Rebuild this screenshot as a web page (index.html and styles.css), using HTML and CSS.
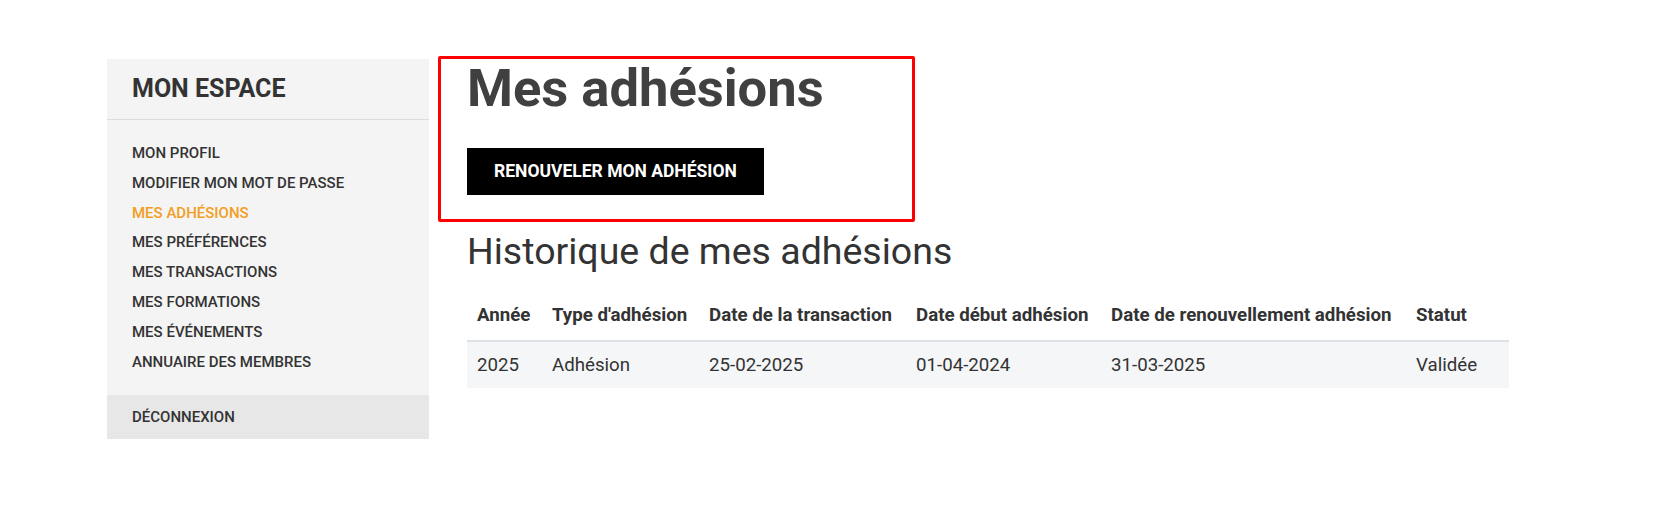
FILE: index.html
```html
<!DOCTYPE html>
<html lang="fr">
<head>
    <meta charset="UTF-8">
    <meta name="viewport" content="width=device-width, initial-scale=1.0">
    <title>Mes adhésions</title>
    <link rel="stylesheet" href="styles.css">
</head>
<body>
    <div class="page">
        <aside class="sidebar">
            <h3 class="sidebar-title">MON ESPACE</h3>
            <ul class="menu">
                <li><a href="#">MON PROFIL</a></li>
                <li><a href="#">MODIFIER MON MOT DE PASSE</a></li>
                <li><a href="#" class="active">MES ADHÉSIONS</a></li>
                <li><a href="#">MES PRÉFÉRENCES</a></li>
                <li><a href="#">MES TRANSACTIONS</a></li>
                <li><a href="#">MES FORMATIONS</a></li>
                <li><a href="#">MES ÉVÉNEMENTS</a></li>
                <li><a href="#">ANNUAIRE DES MEMBRES</a></li>
            </ul>
            <a href="#" class="logout">DÉCONNEXION</a>
        </aside>

        <main class="content">
            <h1>Mes adhésions</h1>
            <button class="btn-renew">RENOUVELER MON ADHÉSION</button>

            <h2>Historique de mes adhésions</h2>
            <table class="history">
                <thead>
                    <tr>
                        <th class="col-year">Année</th>
                        <th class="col-type">Type d'adhésion</th>
                        <th class="col-trans">Date de la transaction</th>
                        <th class="col-start">Date début adhésion</th>
                        <th class="col-renew">Date de renouvellement adhésion</th>
                        <th class="col-status">Statut</th>
                    </tr>
                </thead>
                <tbody>
                    <tr>
                        <td>2025</td>
                        <td>Adhésion</td>
                        <td>25-02-2025</td>
                        <td>01-04-2024</td>
                        <td>31-03-2025</td>
                        <td>Validée</td>
                    </tr>
                </tbody>
            </table>
        </main>

        <!-- cadre rouge d'annotation -->
        <div class="highlight"></div>
    </div>
</body>
</html>
```

FILE: styles.css
```css
body {
    margin: 0;
    font-family: Roboto, "Liberation Sans", Arial, sans-serif;
    color: #333;
    background-color: #fff;
}
.page {
    position: relative;
    display: flex;
    align-items: flex-start;
    gap: 38px;
    padding: 59px 0 0 107px;
}
.sidebar {
    width: 322px;
    flex-shrink: 0;
    background-color: #f4f4f4;
}
.sidebar-title {
    margin: 0;
    padding: 0 25px;
    height: 60px;
    line-height: 60px;
    font-size: 25px;
    font-weight: 700;
    color: #333;
    border-bottom: 1px solid #dcdcdc;
}
.menu {
    list-style: none;
    margin: 0;
    padding: 19px 25px 18px;
    font-size: 15px;
}
.menu li {
    height: 29.8px;
    line-height: 29.8px;
}
.menu a,
.logout {
    font-size: 15px;
    font-weight: 500;
    color: #333;
    text-decoration: none;
}
.menu a.active {
    color: #f29e1f;
}
.logout {
    display: block;
    height: 44px;
    line-height: 44px;
    padding: 0 25px;
    background-color: #e7e7e7;
}
.content {
    width: 1042px;
}
h1 {
    margin: 0;
    font-size: 52.5px;
    line-height: 59px;
    font-weight: 700;
    color: #404040;
}
.btn-renew {
    display: block;
    margin-top: 30px;
    padding: 15px 27px;
    font-family: inherit;
    font-size: 17.5px;
    line-height: 17px;
    font-weight: 700;
    color: #fff;
    background-color: #000;
    border: none;
    cursor: pointer;
}
h2 {
    margin: 34px 0 20px;
    font-size: 37.5px;
    line-height: 45px;
    font-weight: 400;
    color: #333;
}
.history {
    width: 100%;
    border-collapse: collapse;
    table-layout: fixed;
    font-size: 18.7px;
}
.history th,
.history td {
    box-sizing: border-box;
    padding: 12px 10px;
    line-height: 22px;
    text-align: left;
    white-space: nowrap;
}
.history th {
    padding-top: 10px;
    padding-bottom: 14px;
    font-weight: 700;
    border-bottom: 2px solid #dee2e6;
}
.history tbody tr {
    background-color: #f5f6f8;
}
.col-year { width: 75px; }
.col-type { width: 157px; }
.col-trans { width: 207px; }
.col-start { width: 195px; }
.col-renew { width: 305px; }
.col-status { width: 103px; }
.highlight {
    position: absolute;
    left: 438px;
    top: 56px;
    width: 471px;
    height: 160px;
    border: 3px solid #ff0000;
    border-radius: 2px;
    pointer-events: none;
}
```
